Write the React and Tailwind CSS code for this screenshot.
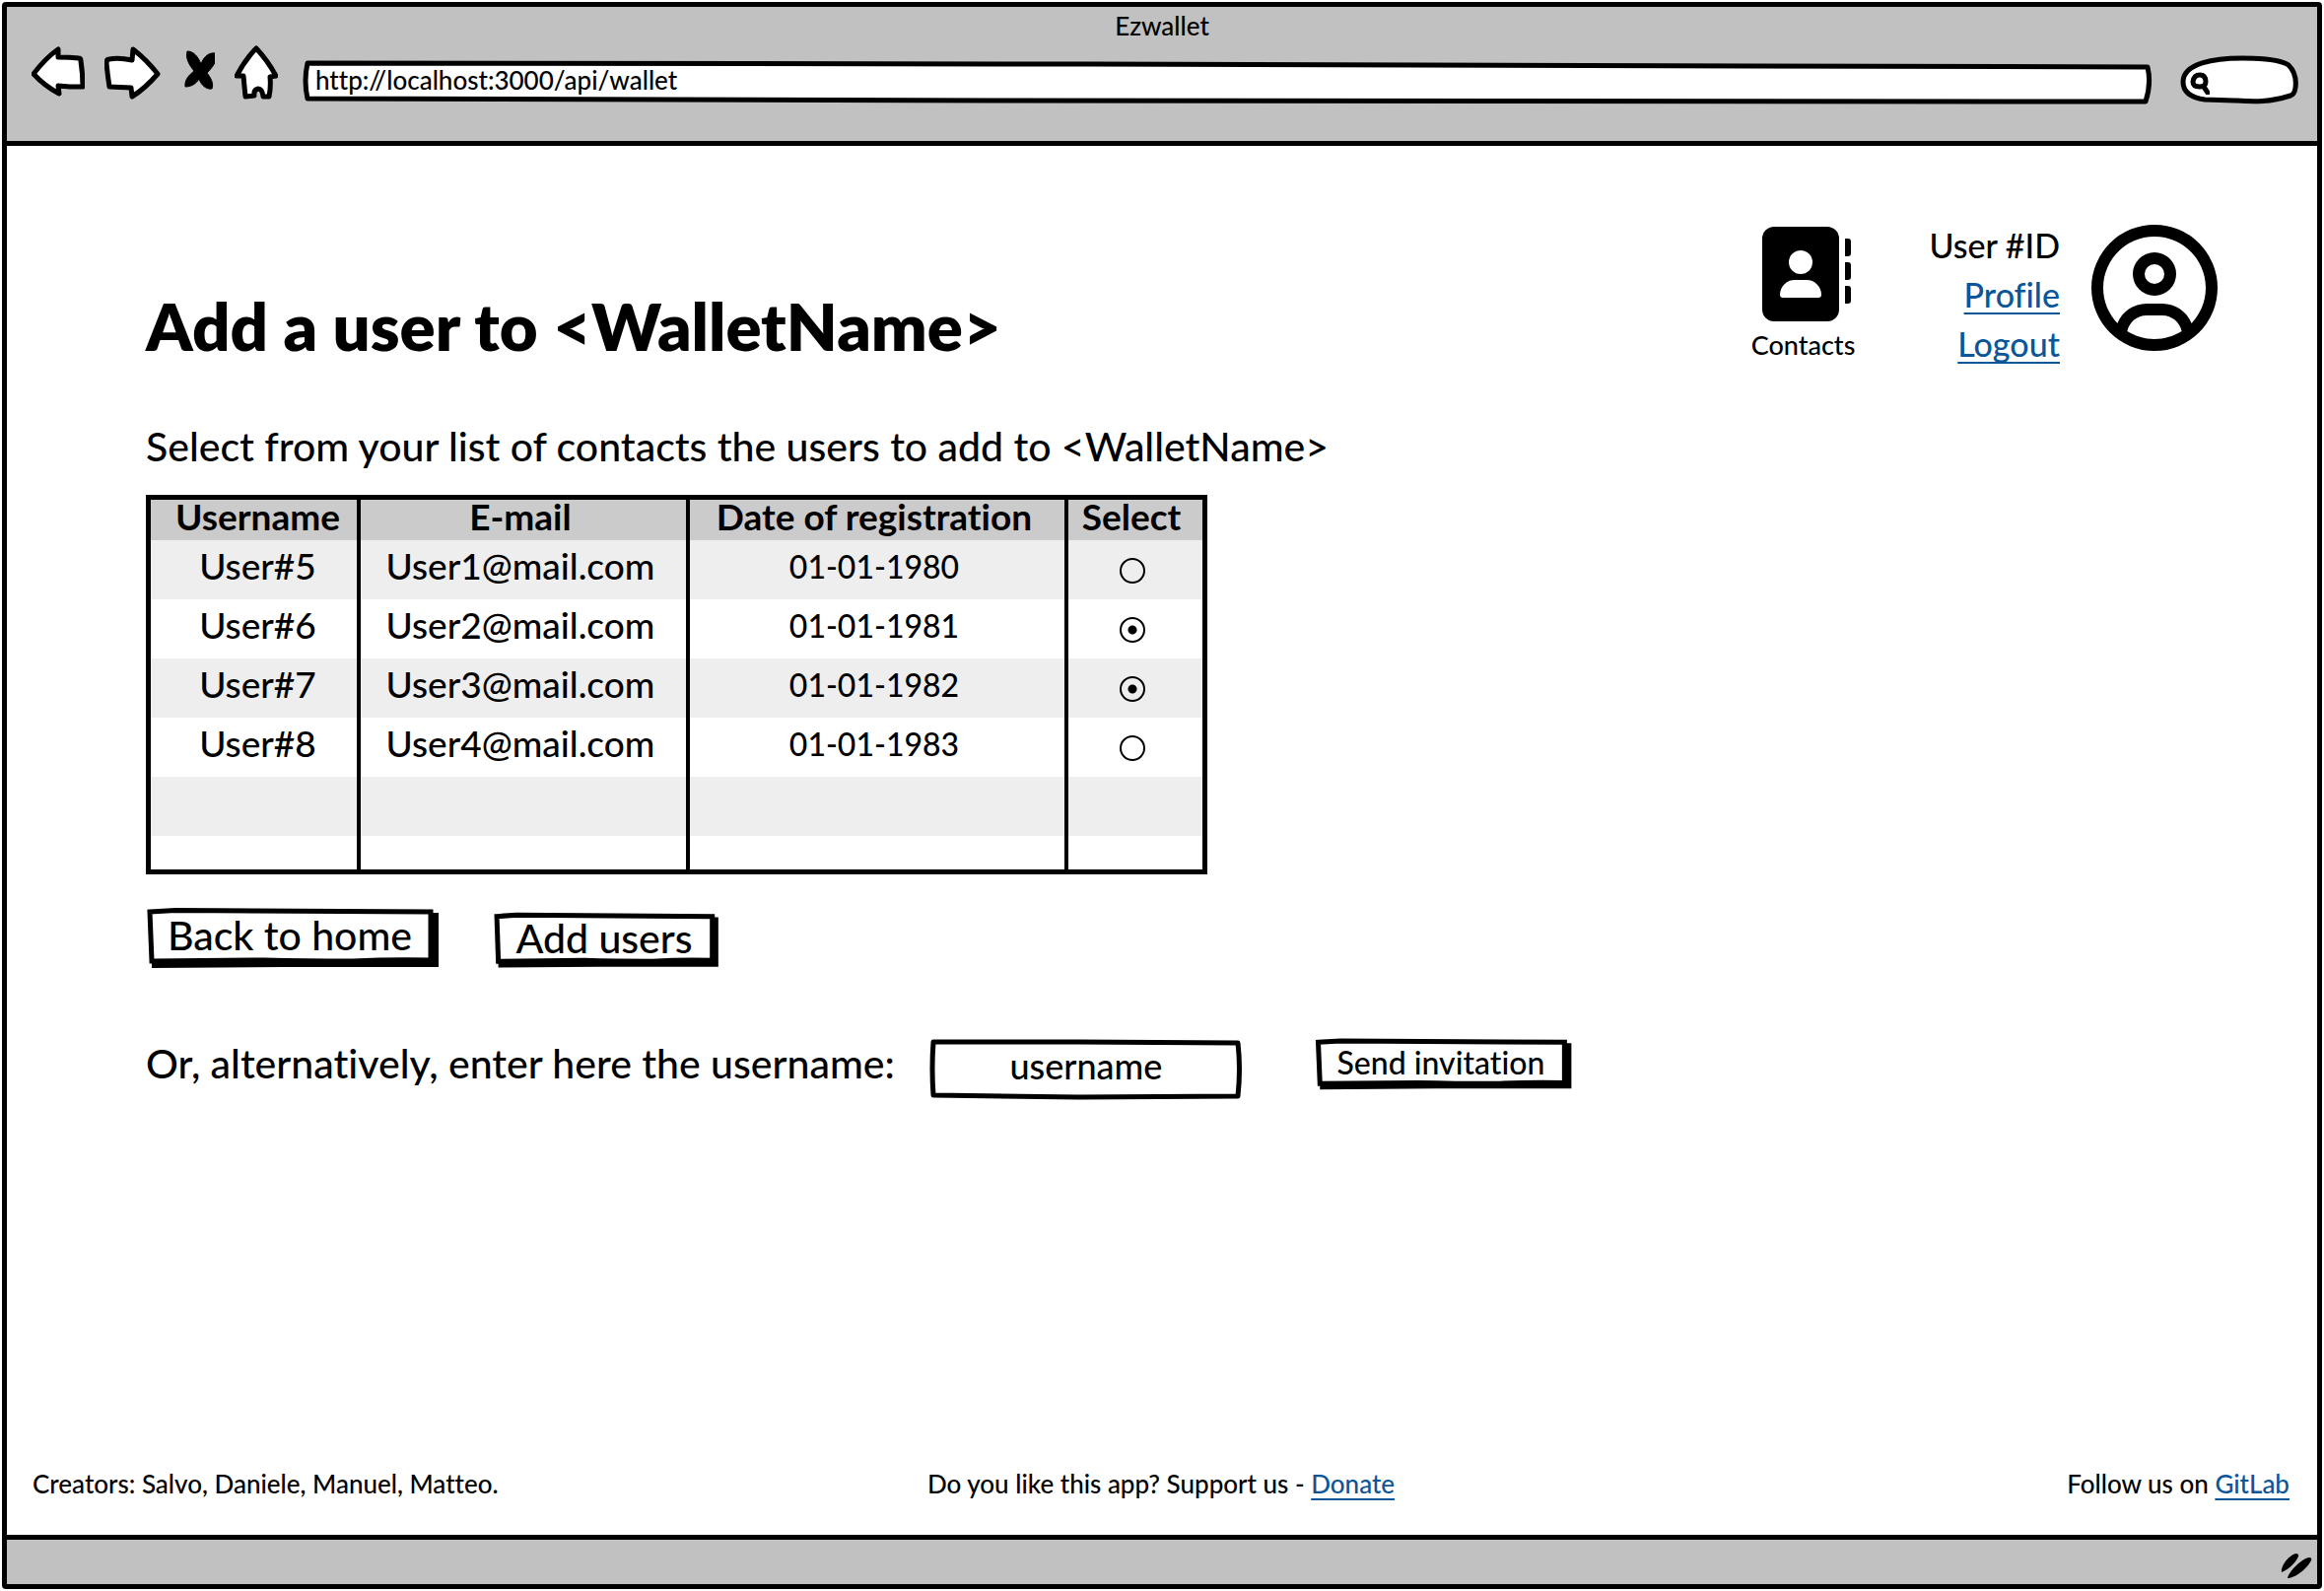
import { FaRegCircleUser } from "react-icons/fa6";

const contacts = [
  { user: "User#5", mail: "User1@mail.com", date: "01-01-1980", selected: false },
  { user: "User#6", mail: "User2@mail.com", date: "01-01-1981", selected: true },
  { user: "User#7", mail: "User3@mail.com", date: "01-01-1982", selected: true },
  { user: "User#8", mail: "User4@mail.com", date: "01-01-1983", selected: false },
];

const linkClass =
  "text-[#0b5699] underline decoration-2 underline-offset-[5px] [text-decoration-skip-ink:none]";

/* Hand-drawn outline that stretches behind a control. */
function Sketch({ viewBox, d, shadow }) {
  return (
    <svg
      className="pointer-events-none absolute inset-0 size-full overflow-visible"
      viewBox={viewBox}
      preserveAspectRatio="none"
      aria-hidden="true"
    >
      {shadow && <path d={shadow} fill="black" />}
      <path
        d={d}
        fill="white"
        stroke="black"
        strokeWidth="5"
        strokeLinejoin={shadow ? "miter" : "round"}
        vectorEffect="non-scaling-stroke"
      />
    </svg>
  );
}

function NavIcon({ label, w, d, filled, className }) {
  return (
    <button type="button" aria-label={label} className={className}>
      <svg
        className="block h-[57px] w-full"
        viewBox={`0 0 ${w} 57`}
        fill={filled ? "black" : "white"}
        stroke="black"
        strokeWidth={filled ? 1 : 5}
        strokeLinejoin="round"
        aria-hidden="true"
      >
        <path d={d} />
      </svg>
    </button>
  );
}

function SketchButton({ children, className }) {
  return (
    <button type="button" className={`relative mr-[5px] mb-1 whitespace-nowrap ${className}`}>
      <Sketch
        viewBox="0 0 292 56"
        d="M4 4 L30 2.5 L289 4 L289 53 Q250 52 210 54 Q160 54 120 53 L6 54 Z"
        shadow="M6 54 L6 61 L140 60 L297 60 L297 5 L288 5 Z"
      />
      <span className="relative">{children}</span>
    </button>
  );
}

function Toolbar() {
  return (
    <header className="border-b-[5px] border-black bg-[#c1c1c1] pb-[37px]">
      <div className="text-center text-[26px] leading-[38px]">Ezwallet</div>
      <div className="flex h-[61px] items-end pr-[19px] pl-[25px]">
        <nav className="flex items-start gap-5 self-start" aria-label="Browser">
          <NavIcon
            label="Back"
            w={54}
            className="w-[54px]"
            d="M2 30 Q14 14 27 5 L27 13 Q39 13 48 14 Q50 14 50 17 Q52 30 52 43 L39 43 L27 42 L28 50 Q13 42 2 30Z"
          />
          <NavIcon
            label="Forward"
            w={58}
            className="w-[58px]"
            d="M5 15 Q14 13 28 16 L29 5 Q43 16 54 30 Q41 45 28 53 L27 44 L5 43 Q3 30 2 19 Q2 15 5 15Z"
          />
          <NavIcon
            label="Stop"
            w={34}
            filled
            className="w-[34px]"
            d="M6 7 C13 7 17 13 20 20 C23 12 28 8 35 9 C37 17 31 24 26 29 C30 34 33 40 31 45 C25 46 20 41 18 35 C15 40 10 43 4 43 C3 36 8 31 13 27 C8 21 4 14 6 7Z"
          />
          <NavIcon
            label="Home"
            w={44}
            className="w-11"
            d="M22 4 Q34 17 42 32 L36 33 Q37 43 35 53 L29 53 Q28 45 24 45 Q19 46 20 52 L11 53 Q10 43 9 32 L2 32 Q11 15 22 4Z"
          />
        </nav>
        <div className="relative ml-[26px] h-[42px] flex-1">
          <Sketch
            viewBox="0 0 1875 42"
            d="M4 0 L800 1 L1872 4 Q1876 21 1870 39 L700 38 L4 36 Q0 18 4 0Z"
          />
          <input
            type="text"
            aria-label="Address"
            defaultValue="http://localhost:3000/api/wallet"
            className="relative block h-[34px] w-full bg-transparent px-3 text-[26px] outline-none"
          />
        </div>
        <div className="relative ml-[30px] h-[50px] w-[120px]">
          <Sketch
            viewBox="0 0 120 50"
            d="M3 27 C3 8 35 3 63 3 C85 3 103 5 110 10 C116 16 118 25 117 33 Q116 40 112 41 C90 48 75 47 55 46 L25 45 Q3 42 3 27Z"
          />
          <svg
            className="absolute top-4 left-2.5 h-6 w-5"
            viewBox="0 0 20 24"
            fill="none"
            stroke="black"
            strokeWidth="5"
            strokeLinecap="round"
            aria-hidden="true"
          >
            <path d="M3 11 Q4 4 10 4 Q16 4 16 11 Q16 16 10 16 Q3 16 3 11Z M14 16 L18 22" />
          </svg>
          <input type="search" aria-label="Search" className="relative block size-full bg-transparent pr-3 pl-8 text-[26px] outline-none" />
        </div>
      </div>
    </header>
  );
}

function ContactBook() {
  return (
    <svg className="size-24" viewBox="0 0 512 512" aria-hidden="true">
      <path d="M96 0H384a64 64 0 0 1 64 64V448a64 64 0 0 1-64 64H96a64 64 0 0 1-64-64V64A64 64 0 0 1 96 0Z" />
      <path d="M480 64h16a16 16 0 0 1 16 16v64a16 16 0 0 1-16 16h-16zM480 192h16a16 16 0 0 1 16 16v64a16 16 0 0 1-16 16h-16zM480 320h16a16 16 0 0 1 16 16v64a16 16 0 0 1-16 16h-16z" />
      <circle cx="240" cy="192" r="64" fill="white" />
      <path fill="white" d="M208 288h64a80 80 0 0 1 80 80a16 16 0 0 1-16 16H144a16 16 0 0 1-16-16a80 80 0 0 1 80-80Z" />
    </svg>
  );
}

function ContactsTable() {
  const cell = "border-l-4 border-black p-0 first:border-l-0";
  return (
    <table className="mt-6 w-[1077px] table-fixed border-separate border-spacing-0 border-[5px] border-black text-center">
      <colgroup>
        <col className="w-[209px]" />
        <col className="w-[334px]" />
        <col className="w-[384px]" />
        <col className="w-[140px]" />
      </colgroup>
      <thead>
        <tr className="h-[41px] bg-[#cbcbcb] text-[37px] leading-[33px]">
          <th className={`${cell} pl-2 pb-2`}>Username</th>
          <th className={`${cell} pr-1.5 pb-2`}>E-mail</th>
          <th className={`${cell} pr-1.5 pb-2`}>Date of registration</th>
          <th className={`${cell} pr-2 pb-2`}>Select</th>
        </tr>
      </thead>
      <tbody>
        {contacts.map((c) => (
          <tr key={c.user} className="h-[60px] text-[37px] leading-[52px] odd:bg-[#eeeeee]">
            <td className={`${cell} pl-2 pb-2`}>{c.user}</td>
            <td className={`${cell} pr-1.5 pb-2`}>{c.mail}</td>
            <td className={`${cell} pr-1.5 pb-1.5 text-[32px]`}>{c.date}</td>
            <td className={`${cell} pt-0.5 pr-1.5`}>
              <input
                type="radio"
                name={`select-${c.user}`}
                aria-label={`Select ${c.user}`}
                defaultChecked={c.selected}
                className="mx-auto block size-[26px] appearance-none rounded-full border-2 border-black checked:bg-[radial-gradient(circle,black_0_4px,transparent_5px)]"
              />
            </td>
          </tr>
        ))}
        <tr className="h-[60px] bg-[#eeeeee]">
          <td className={cell} />
          <td className={cell} />
          <td className={cell} />
          <td className={cell} />
        </tr>
        <tr className="h-[34px]">
          <td className={cell} />
          <td className={cell} />
          <td className={cell} />
          <td className={cell} />
        </tr>
      </tbody>
    </table>
  );
}

export default function App() {
  return (
    <div className="flex min-h-screen w-full flex-col bg-white p-0.5 font-['Lato',sans-serif] font-medium text-black [font-variant-ligatures:none]">
      <div className="flex flex-1 flex-col rounded-sm border-[5px] border-black">
        <Toolbar />

        <main className="pt-[76px] pr-[101px] pl-[141px]">
          <div className="flex items-start">
            <h1 className="pt-[62px] text-[67px] leading-[88px] font-extrabold">
              Add a user to &lt;WalletName&gt;
            </h1>
            <a href="#contacts" className="mt-1.5 ml-auto flex flex-col items-center">
              <ContactBook />
              <span className="mt-1 text-[27px] leading-10">Contacts</span>
            </a>
            <div className="ml-[75px] flex flex-col items-end text-[34px] leading-[50px]">
              <span>User #ID</span>
              <a href="#profile" className={linkClass}>Profile</a>
              <a href="#logout" className={linkClass}>Logout</a>
            </div>
            <FaRegCircleUser className="mt-1 ml-8 size-32" aria-hidden="true" />
          </div>

          <p className="mt-[54px] text-[41px] leading-[50px]">
            Select from your list of contacts the users to add to &lt;WalletName&gt;
          </p>

          <ContactsTable />

          <div className="mt-[34px] flex items-end gap-[56px]">
            <SketchButton className="h-14 w-[292px] text-[41px] leading-[48px]">Back to home</SketchButton>
            <SketchButton className="h-[51px] w-[224px] text-[41px] leading-[46px]">Add users</SketchButton>
          </div>

          <form className="mt-[73px] flex items-center" onSubmit={(e) => e.preventDefault()}>
            <label htmlFor="username" className="pb-3 text-[41px] leading-[49px]">
              Or, alternatively, enter here the username:
            </label>
            <div className="relative ml-9 h-[61px] w-[316px]">
              <Sketch
                viewBox="0 0 316 61"
                d="M3 3 L150 3 L312 4 Q315 30 312 58 L150 59 L3 57 Q1 30 3 3Z"
              />
              <input
                id="username"
                type="text"
                placeholder="username"
                className="relative block h-[54px] w-full bg-transparent text-center text-[36px] outline-none placeholder:text-black"
              />
            </div>
            <SketchButton className="ml-[74px] h-[47px] w-[256px] self-start text-[32px] leading-[42px]">Send invitation</SketchButton>
          </form>
        </main>

        <footer className="mt-auto grid grid-cols-3 pr-7 pb-[34px] pl-[26px] text-[26px] leading-9">
          <span>Creators: Salvo, Daniele, Manuel, Matteo.</span>
          <span className="text-center">
            Do you like this app? Support us - <a href="#donate" className={linkClass}>Donate</a>
          </span>
          <span className="text-right">
            Follow us on <a href="#gitlab" className={linkClass}>GitLab</a>
          </span>
        </footer>

        <div className="flex h-[50px] items-end justify-end border-t-[5px] border-black bg-[#c1c1c1] pr-[5px] pb-1">
          <svg className="h-7 w-8" viewBox="0 0 32 28" aria-hidden="true">
            <path d="M1 20 C0 13 9 2 16 1 Q19 2 18 4 C15 11 8 17 1 20Z M7 26 C9 18 22 6 29 5 Q32 5 31 8 C27 16 15 26 7 26Z" />
          </svg>
        </div>
      </div>
    </div>
  );
}
